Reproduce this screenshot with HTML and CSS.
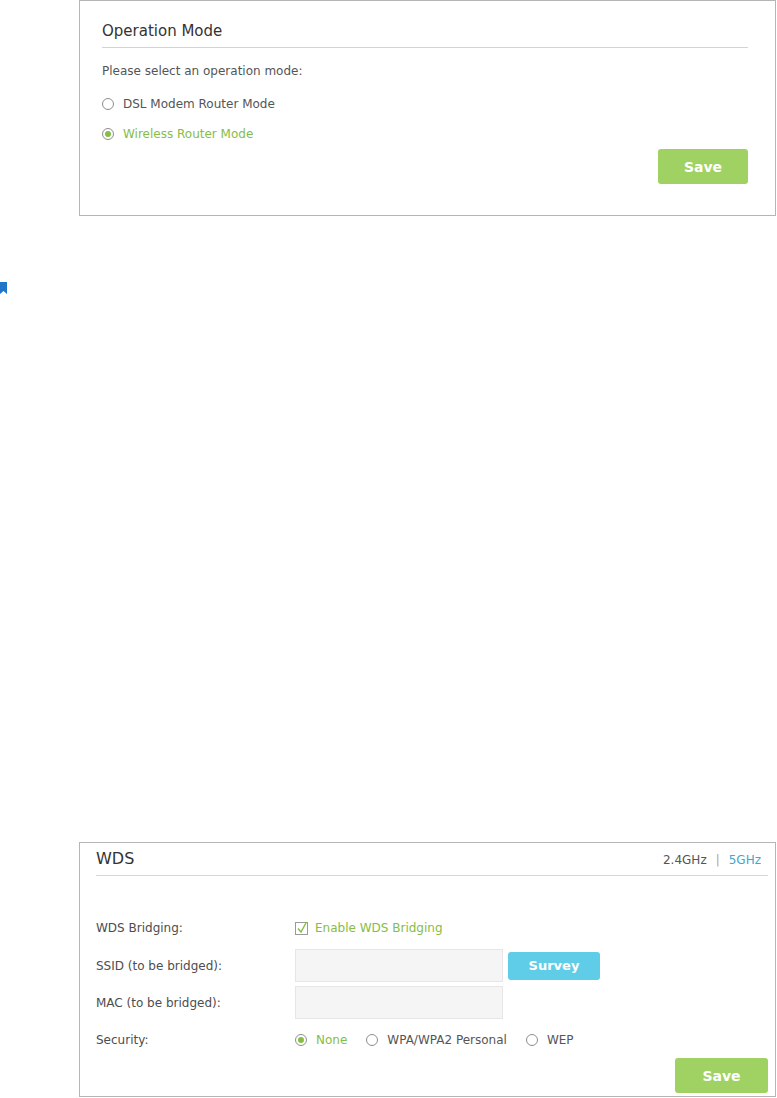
FILE: index.html
```html
<!DOCTYPE html>
<html lang="en">
<head>
    <meta charset="UTF-8">
    <meta name="viewport" content="width=device-width, initial-scale=1.0">
    <title>Operation Mode / WDS</title>
    <link rel="stylesheet" href="styles.css">
</head>
<body>
    <section class="panel panel-mode">
        <h2 class="panel-title">Operation Mode</h2>
        <p class="prompt">Please select an operation mode:</p>

        <div class="mode-list">
            <label class="radio"><span class="radio-dot"></span>DSL Modem Router Mode</label>
            <label class="radio checked"><span class="radio-dot"></span>Wireless Router Mode</label>
        </div>

        <div class="actions">
            <button class="btn-save">Save</button>
        </div>
    </section>

    <div class="bookmark">
        <svg width="8" height="12" viewBox="0 0 8 12"><path d="M0 0H7V12L3.5 9L0 12Z" fill="#1f76c9"/></svg>
    </div>

    <section class="panel panel-wds">
        <div class="wds-head">
            <h2 class="wds-title">WDS</h2>
            <div class="band">
                <span>2.4GHz</span><span class="band-sep">|</span><span class="band-active">5GHz</span>
            </div>
        </div>

        <div class="wds-form">
            <div class="form-row row-first">
                <span class="form-label">WDS Bridging:</span>
                <label class="checkbox">
                    <svg width="14" height="14" viewBox="0 0 14 14">
                        <rect x="0.5" y="1.5" width="12" height="12" fill="#fff" stroke="#9a9a9a"/>
                        <path d="M3 7.5L6 11L11.5 1" fill="none" stroke="#86bd45" stroke-width="1.4"/>
                    </svg>
                    Enable WDS Bridging
                </label>
            </div>
            <div class="form-row">
                <span class="form-label">SSID (to be bridged):</span>
                <input class="text-field" type="text">
                <button class="btn-survey">Survey</button>
            </div>
            <div class="form-row">
                <span class="form-label">MAC (to be bridged):</span>
                <input class="text-field" type="text">
            </div>
            <div class="form-row">
                <span class="form-label">Security:</span>
                <div class="radio-group">
                    <label class="radio checked"><span class="radio-dot"></span>None</label>
                    <label class="radio"><span class="radio-dot"></span>WPA/WPA2 Personal</label>
                    <label class="radio"><span class="radio-dot"></span>WEP</label>
                </div>
            </div>
        </div>

        <div class="actions">
            <button class="btn-save btn-save-wide">Save</button>
        </div>
    </section>
</body>
</html>
```

FILE: styles.css
```css
body {
    margin: 0;
    font-family: "DejaVu Sans", Verdana, sans-serif;
    font-size: 12px;
    color: #555;
    background: #fff;
}

.panel {
    margin-left: 79px;
    width: 697px;
    box-sizing: border-box;
    border: 1px solid #b5b5b5;
}

/* operation mode */

.panel-mode {
    padding: 20px 27px 31px 22px;
}

.panel-title {
    margin: 0;
    padding-bottom: 6px;
    font-size: 15px;
    font-weight: normal;
    line-height: 20px;
    color: #333;
    border-bottom: 1px solid #d3d3d3;
}

.prompt {
    margin: 14px 0 0;
    line-height: 18px;
}

.mode-list {
    display: flex;
    flex-direction: column;
    gap: 12px;
    margin-top: 15px;
}

.radio {
    display: inline-flex;
    align-items: center;
    line-height: 18px;
    cursor: pointer;
}

.radio-dot {
    position: relative;
    width: 12px;
    height: 12px;
    box-sizing: border-box;
    margin-right: 9px;
    border: 1px solid #8e8e8e;
    border-radius: 50%;
    background: #fff;
}

.radio.checked {
    color: #86bd45;
}

.radio.checked .radio-dot::after {
    content: "";
    position: absolute;
    left: 2px;
    top: 2px;
    width: 6px;
    height: 6px;
    border-radius: 50%;
    background: #86bd45;
}

.actions {
    display: flex;
    justify-content: flex-end;
    margin-top: 6px;
}

.btn-save {
    width: 90px;
    height: 35px;
    border: none;
    border-radius: 3px;
    background: #9fd262;
    color: #fff;
    font-family: inherit;
    font-size: 14px;
    font-weight: bold;
    cursor: pointer;
}

.bookmark {
    margin-top: 66px;
    height: 12px;
}

.bookmark svg {
    display: block;
}

/* wds */

.panel-wds {
    margin-top: 548px;
    padding: 6px 7px 3px 16px;
}

.wds-head {
    display: flex;
    justify-content: space-between;
    align-items: baseline;
    padding-bottom: 6px;
    border-bottom: 1px solid #d8d8d8;
}

.wds-title {
    margin: 0;
    font-size: 16px;
    font-weight: normal;
    line-height: 20px;
    color: #333;
}

.band {
    display: flex;
    gap: 9px;
    padding-right: 7px;
}

.band-sep {
    color: #c2a06a;
}

.band-active {
    color: #3fa6d2;
}

.wds-form {
    display: flex;
    flex-direction: column;
    gap: 4px;
    margin-top: 35px;
}

.form-row {
    display: flex;
    align-items: center;
    min-height: 33px;
}

.row-first {
    min-height: 34px;
}

.form-label {
    width: 199px;
    flex-shrink: 0;
    color: #4d4d4d;
}

.checkbox {
    display: inline-flex;
    align-items: center;
    gap: 6px;
    color: #86bd45;
}

.checkbox svg {
    display: block;
}

.text-field {
    width: 208px;
    height: 33px;
    box-sizing: border-box;
    margin: 0;
    border: 1px solid #e6e6e6;
    background: #f5f5f5;
}

.btn-survey {
    width: 92px;
    height: 28px;
    margin-left: 5px;
    border: none;
    border-radius: 3px;
    background: #5fcde8;
    color: #fff;
    font-family: inherit;
    font-size: 13px;
    font-weight: bold;
    cursor: pointer;
}

.radio-group {
    display: flex;
    gap: 19px;
}

.panel-wds .actions {
    margin-top: 2px;
}

.btn-save-wide {
    width: 93px;
}
```
